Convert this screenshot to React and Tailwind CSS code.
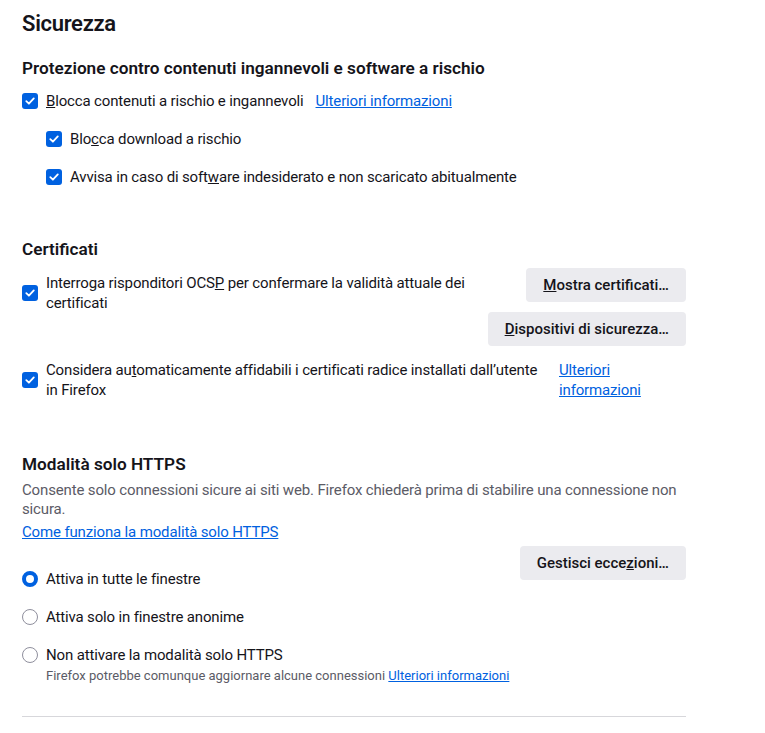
import React, { useState } from "react";

const font = { fontFamily: "Roboto, 'Noto Sans', sans-serif" };

const Check = ({ checked, onChange }) => (
  <button
    onClick={onChange}
    className={`w-4 h-4 shrink-0 rounded-[3px] flex items-center justify-center ${
      checked ? "bg-[#0061e0]" : "border border-[#8f8f9d] bg-white"
    }`}
  >
    {checked && (
      <svg width="12" height="12" viewBox="0 0 12 12">
        <path d="M2.3 6.2 4.9 8.7 9.8 3.4" fill="none" stroke="white" strokeWidth="1.8" strokeLinecap="round" strokeLinejoin="round" />
      </svg>
    )}
  </button>
);

const Radio = ({ checked, onChange }) => (
  <button
    onClick={onChange}
    className={`w-4 h-4 shrink-0 rounded-full bg-white ${
      checked ? "border-[4px] border-[#0061e0]" : "border border-[#8f8f9d]"
    }`}
  />
);

const Link = ({ children, className = "" }) => (
  <a href="#" className={`text-[#0061e0] underline ${className}`}>
    {children}
  </a>
);

const Btn = ({ children }) => (
  <button className="h-[34px] px-[17px] rounded-[4px] bg-[#ebebef] text-[15px] font-medium text-[#15141a] whitespace-nowrap tracking-normal">
    {children}
  </button>
);

export default function App() {
  const [checks, setChecks] = useState({ block: true, downloads: true, unwanted: true, ocsp: true, enterprise: true });
  const [mode, setMode] = useState("all");
  const toggle = (k) => setChecks((p) => ({ ...p, [k]: !p[k] }));

  return (
    <div className="w-[765px] min-h-[733px] bg-white text-[#15141a] text-[15px] tracking-[-0.15px]" style={font}>
      <div className="w-[664px] ml-[22px] pt-[9px]">
        {/* Sicurezza */}
        <h1 className="text-[22px] font-semibold leading-[30px] tracking-[-0.3px]">Sicurezza</h1>

        <h2 className="mt-[17px] text-[17.2px] font-semibold leading-[24px] tracking-normal">
          Protezione contro contenuti ingannevoli e software a rischio
        </h2>

        <div className="mt-[9px] flex items-center gap-2 h-[24px]">
          <Check checked={checks.block} onChange={() => toggle("block")} />
          <span>
            <u>B</u>locca contenuti a rischio e ingannevoli
          </span>
          <Link className="ml-1">Ulteriori informazioni</Link>
        </div>
        <div className="mt-[14px] ml-6 flex items-center gap-2 h-[24px]">
          <Check checked={checks.downloads} onChange={() => toggle("downloads")} />
          <span>
            Blo<u>c</u>ca download a rischio
          </span>
        </div>
        <div className="mt-[14px] ml-6 flex items-center gap-2 h-[24px]">
          <Check checked={checks.unwanted} onChange={() => toggle("unwanted")} />
          <span>
            Avvisa in caso di soft<u>w</u>are indesiderato e non scaricato abitualmente
          </span>
        </div>

        {/* Certificati */}
        <h2 className="mt-[48px] text-[17.2px] font-semibold leading-[24px] tracking-normal">Certificati</h2>

        <div className="mt-[7px] flex items-start justify-between">
          <div className="flex items-center gap-2 mt-[5px]">
            <Check checked={checks.ocsp} onChange={() => toggle("ocsp")} />
            <span className="leading-[20px]">
              Interroga risponditori OCS<u>P</u> per confermare la validità attuale dei
              <br />
              certificati
            </span>
          </div>
          <div className="flex flex-col items-end gap-[10px]">
            <Btn>
              <u>M</u>ostra certificati…
            </Btn>
            <Btn>
              <u>D</u>ispositivi di sicurezza…
            </Btn>
          </div>
        </div>

        <div className="mt-[14px] flex items-center">
          <div className="flex items-center gap-2 w-[537px]">
            <Check checked={checks.enterprise} onChange={() => toggle("enterprise")} />
            <span className="leading-[20px]">
              Considera au<u>t</u>omaticamente affidabili i certificati radice installati dall’utente
              <br />
              in Firefox
            </span>
          </div>
          <Link className="leading-[20px]">
            Ulteriori
            <br />
            informazioni
          </Link>
        </div>

        {/* HTTPS */}
        <h2 className="mt-[52px] text-[17.2px] font-semibold leading-[24px] tracking-normal">Modalità solo HTTPS</h2>
        <p className="mt-[5px] text-[#5b5b66] leading-[19px]">
          <span className="whitespace-nowrap">
            Consente solo connessioni sicure ai siti web. Firefox chiederà prima di stabilire una connessione non
          </span>
          <br />
          sicura.
        </p>
        <div className="mt-[3px] leading-[20px]">
          <Link>Come funziona la modalità solo HTTPS</Link>
        </div>

        <div className="mt-[4px] flex items-start justify-between">
          <div className="pt-[21px]">
            <div className="flex items-center gap-2 h-[24px]">
              <Radio checked={mode === "all"} onChange={() => setMode("all")} />
              <span>Attiva in tutte le finestre</span>
            </div>
            <div className="mt-[14px] flex items-center gap-2 h-[24px]">
              <Radio checked={mode === "private"} onChange={() => setMode("private")} />
              <span>Attiva solo in finestre anonime</span>
            </div>
            <div className="mt-[14px] flex items-center gap-2 h-[24px]">
              <Radio checked={mode === "off"} onChange={() => setMode("off")} />
              <span>Non attivare la modalità solo HTTPS</span>
            </div>
            <div className="ml-6 text-[13px] text-[#5b5b66] leading-[18px] tracking-normal">
              Firefox potrebbe comunque aggiornare alcune connessioni <Link>Ulteriori informazioni</Link>
            </div>
          </div>
          <Btn>
            Gestisci ecce<u>z</u>ioni…
          </Btn>
        </div>

        <hr className="mt-[31px] border-t border-[#d7d7db]" />
      </div>
    </div>
  );
}
